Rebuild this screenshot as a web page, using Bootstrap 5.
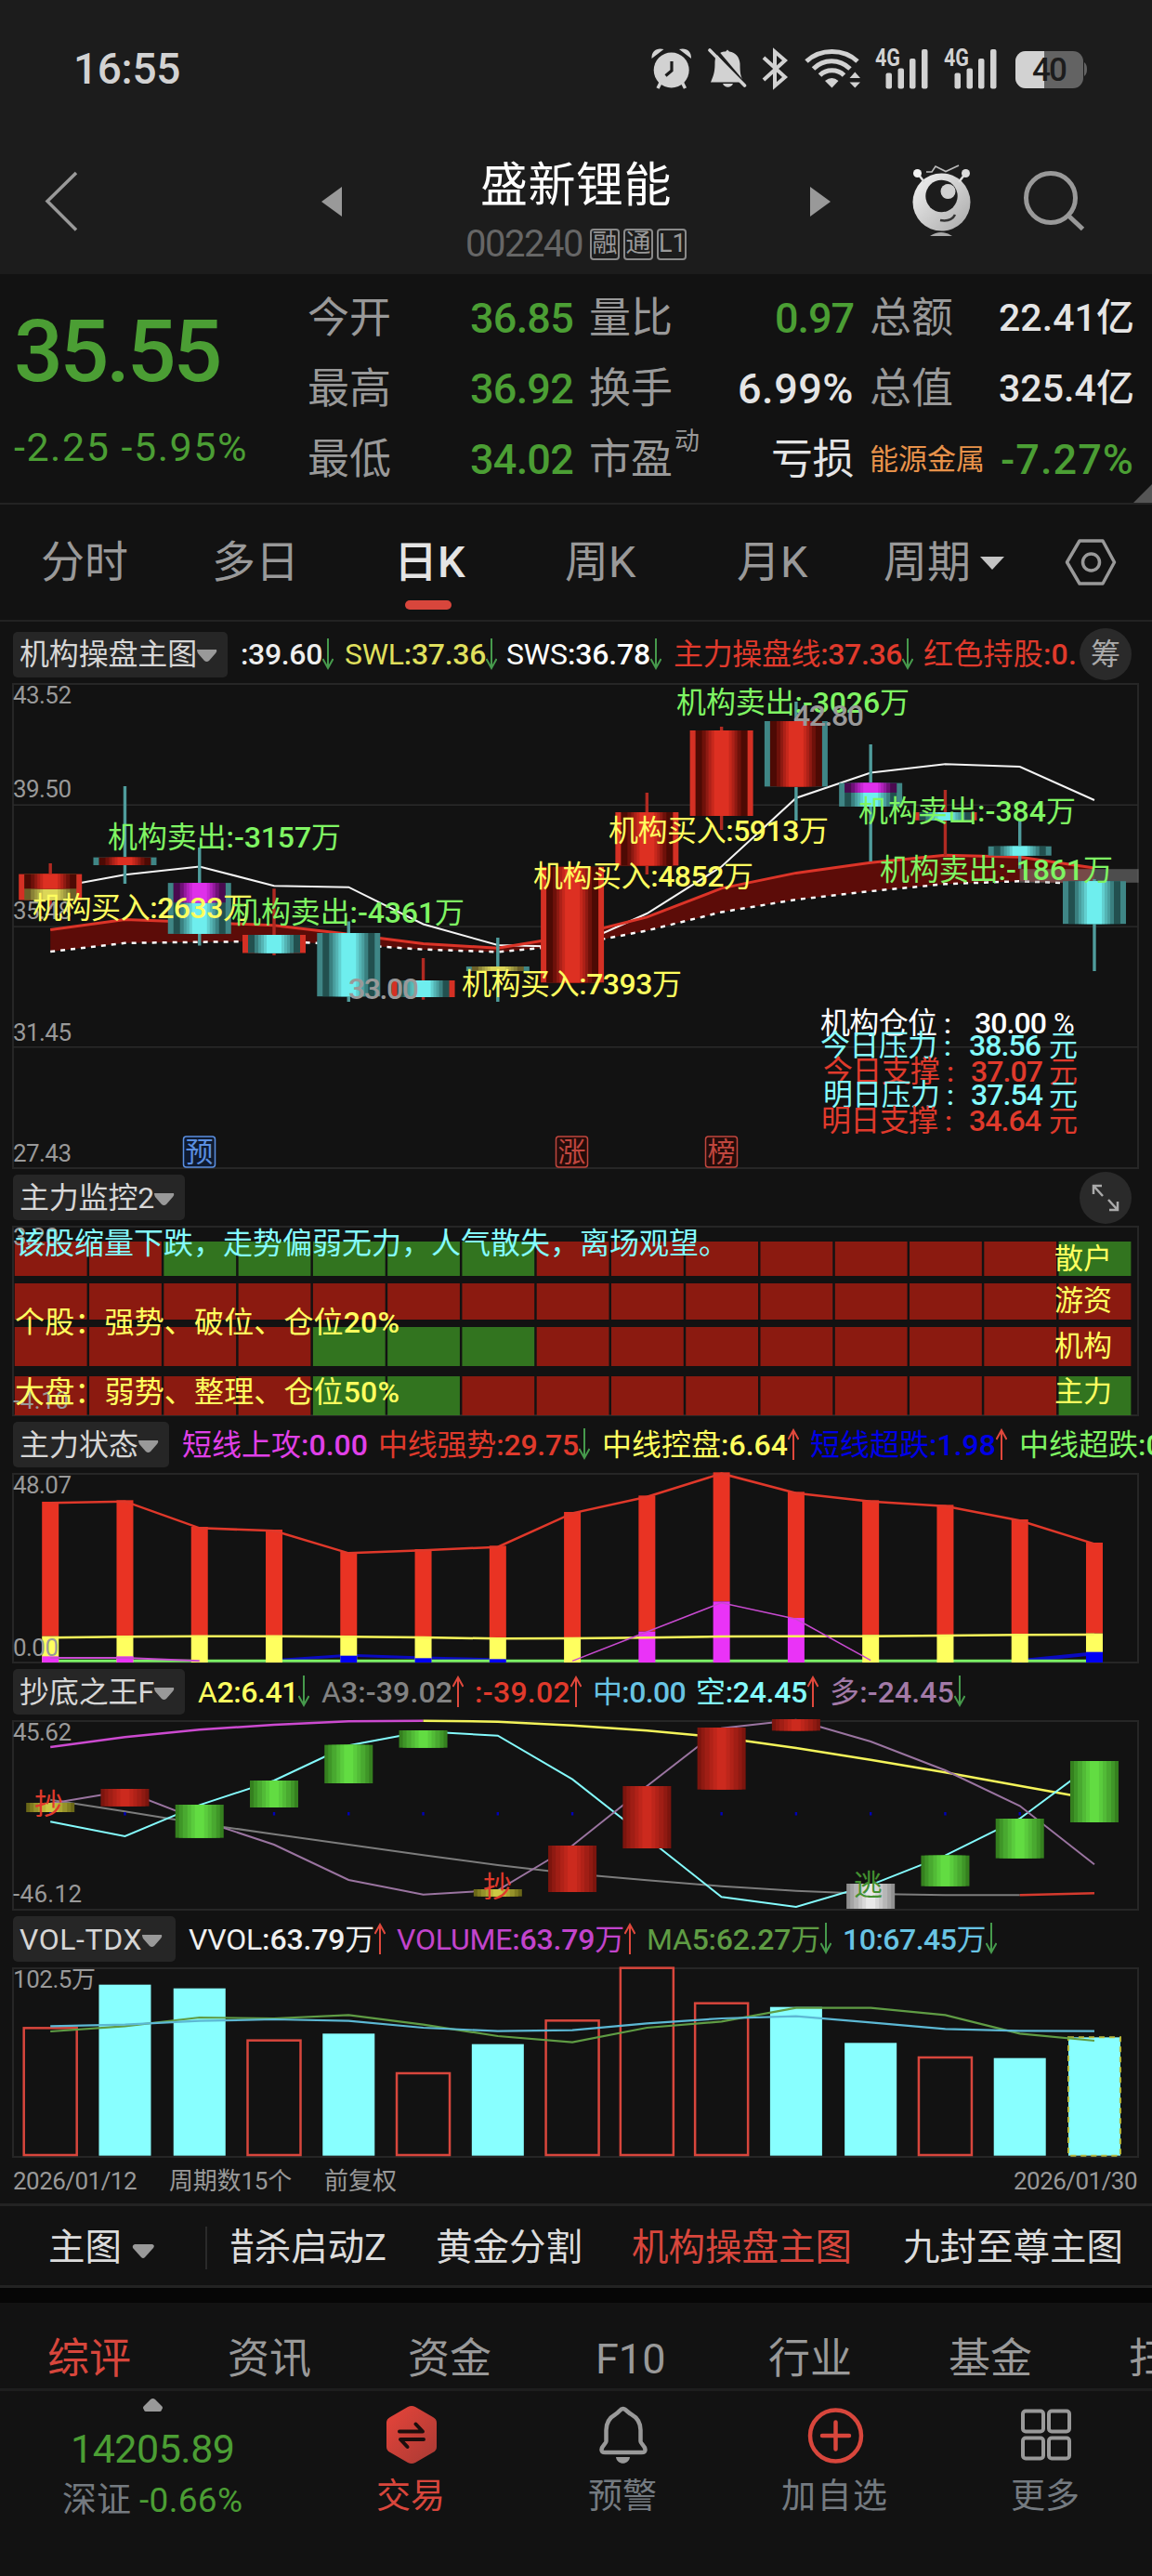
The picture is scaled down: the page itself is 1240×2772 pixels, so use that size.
<!DOCTYPE html>
<html lang="zh-CN">
<head>
    <meta charset="UTF-8">
    <meta name="viewport" content="width=device-width, initial-scale=1.0">
    <title>盛新锂能 002240</title>
    <!-- Bootstrap CDN -->
    <link href="https://cdn.jsdelivr.net/npm/bootstrap@5.3.0/dist/css/bootstrap.min.css" rel="stylesheet">
    <style>
        body {
            width: 1240px;
            height: 2772px;
            overflow: hidden;
            background: #121212;
            color: #999;
            font-family: Roboto, "Noto Sans CJK SC", sans-serif;
            font-size: 32px;
            line-height: 1;
            white-space: nowrap;
        }

        svg { display: block; flex: none; }
        svg.plot { overflow: visible; }
        .down { color: #4b9e34; }
        .light { color: #e4e4e4; }
        .hot { color: #d8463c; }
        .rule { border-bottom: 2px solid #232323; }

        .statusbar { height: 120px; background: #1c1c1c; padding: 0 60px 0 79px; }
        .clock { font-size: 46px; font-weight: 500; color: #d2d2d2; padding-top: 51px; }
        .titlebar { height: 175px; background: #1c1c1c; }
        .title-text { padding-top: 52px; }
        .stock-name { font-size: 51px; line-height: 56px; color: #fff; }
        .stock-code { font-size: 40px; color: #666; line-height: 34px; }
        .stock-line { margin-top: 18px; }
        .tag { border: 2px solid #8a8a8a; border-radius: 4px; width: 32px; height: 34px; font-size: 27px; line-height: 29px; color: #999; text-align: center; }

        .quote { height: 248px; padding: 9px 19px 0 15px; }
        .price { width: 316px; padding-top: 25px; }
        .price-now { font-size: 93px; line-height: 100px; font-weight: 500; }
        .price-diff { font-size: 43px; line-height: 60px; margin-top: 22px; }
        .facts { display: grid; grid-template-columns: 286px 285px 285px; column-gap: 17px; grid-auto-rows: 76px; font-size: 45px; }
        .facts .val { font-weight: 500; }
        .facts .cjk { font-weight: 400; }
        .sup { font-size: 27px; top: 6px; left: 92px; }
        .corner { right: 0; bottom: 0; }

        .periods { height: 126px; font-size: 47px; padding-left: 44px; }
        .period { height: 124px; line-height: 124px; }
        .pill { width: 50px; height: 10px; border-radius: 5px; background: #d8463c; left: 12px; bottom: 11px; }

        .legend-row { height: 61px; padding-left: 14px; }
        .legend-row.first { height: 67px; padding-top: 3px; }
        .legend-row .chip { height: 49px; border-radius: 5px; background: #262626; color: #d6d6d6; padding-left: 7px; }
        .fit { display: inline-block; }
        .round-btn { width: 56px; height: 56px; border-radius: 50%; background: #2a2a2a; right: 22px; top: 3px; font-size: 32px; color: #aaa; }
        .legend-row.first .round-btn { top: 7px; }

        .num { font-weight: 500; }
        .axis { fill: #999; font-size: 26px; }
        .dates { height: 49px; font-size: 26px; padding: 0 16px 0 14px; }
        .switcher { height: 91px; font-size: 39.5px; color: #dcdcdc; border-top: 3px solid #232323; border-bottom: 3px solid #232323; padding-top: 4px; }
        .vline { width: 2px; height: 46px; background: #2a2a2a; }
        .gap-bar { height: 16px; background: #060606; }
        .info-tabs { height: 92px; font-size: 45px; line-height: 66px; padding: 28px 0 0 51px; }
        .info-tabs > div { flex: 0 0 194px; }
        .bottom { border-top: 3px solid #1e1e1e; height: 202px; }
    </style>
</head>
<body>
    <!-- Phone status bar -->
    <div class="statusbar d-flex justify-content-between">
        <div class="clock"><span class="fit" data-w="115">16:55</span></div>
        <svg width="490" height="70" viewBox="0 0 490 70" style="margin-top: 40px" fill="#d2d2d2">
            <path d="M11.500 23C11 15 17 11 24.500 13ZM54 23C54.500 15 48.500 11 41 13Z"/>
            <circle cx="32.700" cy="35.500" r="19"/>
            <path d="M21 49l-3 6M44.500 49l3 6" stroke="#d2d2d2" stroke-width="3.500"/>
            <path d="M33 26v10l-6.500 5.500" fill="none" stroke="#1c1c1c" stroke-width="3.200"/>
            <path d="M80 22c3-5 7-6.500 11-6.500l2-2 2 2c7 1 11 6 11.500 13 0 11 1 13 2.500 17v3H75c4-9 4.500-13 4.500-22z"/>
            <path d="M88 50h11c-2 5-9 5-11 0z"/>
            <path d="M76 9l38 45" stroke="#1c1c1c" stroke-width="4"/>
            <path d="M74 14l37.500 38" stroke="#d2d2d2" stroke-width="3.600" stroke-linecap="round"/>
            <path d="M132 22l23 21-11 9.500V15.500L155 25 132 46" fill="none" stroke="#d2d2d2" stroke-width="4"/>
            <g fill="none" stroke="#d2d2d2" stroke-width="5">
                <path d="M178 26c15-14 40-14 55 0M185.500 34c11-11 28-11 39.500 0M192.500 41c7-7 19-7 26 0"/>
            </g>
            <path d="M198 47q7.500-6 14.500 0l-7 7.500zM224.500 44h11.500l-5.700-6.500zM224.500 48.500h11.500l-5.700 6z"/>
            <g id="signalBars">
                <rect x="263.500" y="38.500" width="6.500" height="17" rx="2"/>
                <rect x="276.500" y="33.500" width="6.500" height="22" rx="2"/>
                <rect x="289" y="23" width="6.500" height="32.500" rx="2"/>
                <rect x="302" y="13" width="6.500" height="42.500" rx="2"/>
                <text x="252" y="30.500" font-size="25" font-weight="700" textLength="27" lengthAdjust="spacingAndGlyphs">4G</text>
            </g>
            <use href="#signalBars" x="74"/>
            <rect x="403" y="15" width="73" height="40" rx="11" fill="#636363"/>
            <path d="M477 27c4 2 4 13 0 15z" fill="#636363"/>
            <path d="M434 15h-20a11 11 0 0 0-11 11v18a11 11 0 0 0 11 11h20z"/>
            <text x="421" y="47" font-size="35" font-weight="500" fill="#1c1c1c" textLength="38">40</text>
        </svg>
    </div>

    <!-- Title -->
    <div class="titlebar position-relative">
        <svg width="1240" height="175" viewBox="0 120 1240 175">
            <defs>
                <linearGradient id="ball" x1="0" y1="0" x2="1" y2="1"><stop stop-color="#f4f4f4"/><stop offset="1" stop-color="#a8a8a8"/></linearGradient>
            </defs>
            <path d="M82 186L51 216.500l31 31" fill="none" stroke="#999" stroke-width="3.500"/>
            <path d="M368 201v32l-22-16zM872 201v32l22-16z" fill="#999"/>
            <circle cx="1013.500" cy="217.500" r="31" fill="url(#ball)"/>
            <circle cx="1013.500" cy="211" r="17.200" fill="#1c1c1c"/>
            <circle cx="1020.500" cy="206" r="8" fill="#d0d0d0"/>
            <path d="M1012 237q12 2 16-6" fill="none" stroke="#333" stroke-width="2.500"/>
            <path d="M988 187l7 9M1039 187l-7 9" stroke="#ddd" stroke-width="2.500"/>
            <circle cx="987.500" cy="186.500" r="4.500" fill="#f2f2f2"/><circle cx="1039.500" cy="186.500" r="4.500" fill="#ddd"/>
            <path d="M997 185h6l4-6 11 5.500 14-6.500" fill="none" stroke="#bbb" stroke-width="1.600"/>
            <path d="M1001 254q12-8 24 0z" fill="#aaa"/>
            <circle cx="1131" cy="213" r="26.500" fill="none" stroke="#999" stroke-width="5"/>
            <path d="M1150.500 232.500l15 14" stroke="#999" stroke-width="5"/>
        </svg>
        <div class="title-text position-absolute top-0 start-50 translate-middle-x d-flex flex-column align-items-center">
            <div class="stock-name"><span class="fit" data-w="206">盛新锂能</span></div>
            <div class="stock-line d-flex align-items-center gap-1">
                <span class="stock-code me-1"><span class="fit" data-w="126">002240</span></span>
                <span class="tag">融</span><span class="tag">通</span><span class="tag">L1</span>
            </div>
        </div>
    </div>

    <!-- Quote -->
    <div class="quote rule d-flex position-relative">
        <div class="price down">
            <div class="price-now"><span class="fit" data-w="221">35.55</span></div>
            <div class="price-diff"><span class="fit" data-w="252">-2.25 -5.95%</span></div>
        </div>
        <div class="facts" id="facts"></div>
        <svg class="corner position-absolute" width="20" height="20" viewBox="0 0 20 20"><path d="M20 0v20H0z" fill="#555"/></svg>
    </div>

    <!-- Periods -->
    <div class="periods rule d-flex">
        <div class="period" style="width: 184px">分时</div>
        <div class="period" style="width: 196px">多日</div>
        <div class="period light position-relative" style="width: 184px"><span class="fw-medium">日K</span><span class="pill position-absolute"></span></div>
        <div class="period" style="width: 185px">周K</div>
        <div class="period" style="width: 158px">月K</div>
        <div class="period" style="width: 104px">周期</div>
        <svg width="185" height="124" viewBox="0 0 185 124">
            <path d="M0 56h26L13 70z" fill="#c4c4c4"/>
            <path d="M107 39h25l12.500 23L132 85h-25L93.500 62z" fill="none" stroke="#999" stroke-width="3.500" stroke-linejoin="round"/>
            <circle cx="119.500" cy="62" r="9" fill="none" stroke="#999" stroke-width="3.500"/>
        </svg>
    </div>

    <!-- Main chart -->
    <div class="legend-row first d-flex align-items-center position-relative" id="legendMain">
        <span class="round-btn position-absolute d-flex align-items-center justify-content-center">筹</span>
    </div>
    <svg class="plot" id="plotMain" width="1240" height="522" viewBox="0 736 1240 522"></svg>

    <!-- Monitor grid -->
    <div class="legend-row d-flex align-items-center position-relative" id="legendMonitor">
        <span class="round-btn position-absolute d-flex align-items-center justify-content-center">
            <svg width="30" height="30" viewBox="0 0 30 30" fill="none" stroke="#aaa" stroke-width="2.500"><path d="M2 11V2h9M2 2l10 11M28 19v9h-9M28 28L18 17"/></svg>
        </span>
    </div>
    <svg class="plot" id="plotMonitor" width="1240" height="205" viewBox="0 1319 1240 205"></svg>

    <!-- State -->
    <div class="legend-row d-flex align-items-center overflow-hidden" id="legendState"></div>
    <svg class="plot" id="plotState" width="1240" height="205" viewBox="0 1585 1240 205"></svg>

    <!-- Bottom fishing -->
    <div class="legend-row d-flex align-items-center" id="legendKing"></div>
    <svg class="plot" id="plotKing" width="1240" height="205" viewBox="0 1851 1240 205"></svg>

    <!-- Volume -->
    <div class="legend-row d-flex align-items-center" id="legendVol"></div>
    <svg class="plot" id="plotVol" width="1240" height="205" viewBox="0 2117 1240 205"></svg>

    <div class="dates d-flex align-items-center">
        <span class="fit" data-w="133">2026/01/12</span>
        <span class="fit" data-w="132" style="margin-left: 35px">周期数15个</span>
        <span class="fit" data-w="78" style="margin-left: 35px">前复权</span>
        <span class="fit ms-auto" data-w="133">2026/01/30</span>
    </div>

    <!-- Indicator switcher -->
    <div class="switcher d-flex align-items-center">
        <span style="margin-left: 52px">主图</span>
        <svg width="25" height="16" viewBox="0 0 25 16" class="mt-2" style="margin: 0 54px 0 11px"><path d="M3 0h19q3 1 1 4L14 14q-2 2-4 0L1 4Q0 1 3 0z" fill="#999"/></svg>
        <span class="vline"></span>
        <span class="d-flex justify-content-end overflow-hidden lh-base" style="width: 168px; margin-left: 25px">猎杀启动Z</span>
        <span style="margin-left: 53px">黄金分割</span>
        <span class="hot" style="margin-left: 53px">机构操盘主图</span>
        <span style="margin-left: 55px">九封至尊主图</span>
    </div>
    <div class="gap-bar"></div>

    <div class="info-tabs d-flex overflow-hidden">
        <div class="hot">综评</div><div>资讯</div><div>资金</div><div><span class="ps-2">F10</span></div><div>行业</div><div>基金</div><div>扫雷</div>
    </div>

    <!-- Bottom bar -->
    <div class="bottom">
        <svg width="1240" height="199" viewBox="0 2573 1240 199" font-size="37" fill="#747a80">
            <defs>
                <linearGradient id="hex" x1="0" y1="0" x2="1" y2="1"><stop stop-color="#e8443a"/><stop offset="1" stop-color="#a83a34"/></linearGradient>
            </defs>
            <path d="M155 2593q-2-2 0-4l7-7q2.500-2 5 0l7 7q2 2 0 4 0 2-3 2h-13q-3 0-3-2z" fill="#999"/>
            <text x="76" y="2650" font-size="43" fill="#4b9e34" textLength="177">14205.89</text>
            <text x="67" y="2703">深证</text>
            <text x="150" y="2703" fill="#4b9e34" textLength="111">-0.66%</text>

            <path d="M439 2590q4-2 8 0l19 11q4 2 4 6v26q0 4-4 6l-19 11q-4 2-8 0l-19-11q-4-2-4-6v-26q0-4 4-6z" fill="url(#hex)"/>
            <path d="M430 2616.500h25l-7.500-8M456 2625h-25l7.500 8" fill="none" stroke="#1c0e0d" stroke-width="4" stroke-linecap="round" stroke-linejoin="round"/>
            <text x="405" y="2699" fill="#d8463c">交易</text>

            <path d="M670.500 2592c-3 0-4 4-8 6-7 4-10 9-10 17v12c0 3-5 5-5 9 0 3 2 3 4 3h39c2 0 4 0 4-3 0-4-5-6-5-9v-12c0-8-3-13-10-17-4-2-6-6-9-6z" fill="none" stroke="#999" stroke-width="4.500" stroke-linejoin="round"/>
            <path d="M663 2644h15c-1 9-14 9-15 0z" fill="#999"/>
            <text x="633" y="2699">预警</text>

            <circle cx="899.500" cy="2621" r="27.500" fill="none" stroke="#d8463c" stroke-width="4.500"/>
            <path d="M899.500 2606.500v29M885 2621h29" stroke="#d8463c" stroke-width="4.500" stroke-linecap="round"/>
            <text x="841" y="2699" textLength="114">加自选</text>

            <g fill="none" stroke="#999" stroke-width="4">
                <rect x="1101" y="2594.500" width="22" height="22" rx="3"/><rect x="1129" y="2594.500" width="22" height="22" rx="3"/>
                <rect x="1101" y="2623.500" width="22" height="22" rx="3"/><rect x="1129" y="2623.500" width="22" height="22" rx="3"/>
            </g>
            <text x="1088" y="2699">更多</text>
        </svg>
    </div>

    <!-- Bootstrap JS -->
    <script src="https://cdn.jsdelivr.net/npm/bootstrap@5.3.0/dist/js/bootstrap.bundle.min.js"></script>
    <script>
        const RED = '#e93323', GREEN = '#7ff563', YELLOW = '#ffff5f', CYAN = '#84fbfd', WHITE = '#fff';
        const UP = 'up', DOWN = 'down';

        // Digits are set heavier than the words around them
        const digits = (s, tag) => s.replace(/[\d.:%-]+/g, m => `<${tag} class="num">${m}</${tag}>`);

        // Quote facts: label, value, width, class
        const facts = [
            ['今开', '36.85', 111, 'down'], ['量比', '0.97', 85, 'down'], ['总额', '22.41亿', 146, 'light'],
            ['最高', '36.92', 111, 'down'], ['换手', '6.99%', 125, 'light'], ['总值', '325.4亿', 146, 'light'],
            ['最低', '34.02', 111, 'down'], ['市盈', '亏损', 89, 'light cjk'], ['能源金属', '-7.27%', 144, 'down']
        ];
        document.getElementById('facts').innerHTML = facts.map(([label, value, w, cls], i) => {
            const sector = i === 8;
            const size = value.includes('亿') ? 41 : 45;
            return `<div class="d-flex align-items-center justify-content-between position-relative">
                <span style="${sector ? 'font-size:31px;color:#e8924a' : ''}">${label}</span>
                ${i === 7 ? '<span class="sup position-absolute">动</span>' : ''}
                <span class="val ${cls}" style="font-size:${size}px"><span class="fit" data-w="${w}">${value}</span></span></div>`;
        }).join('');

        // Legends: text, colour, left edge, width, arrow
        function legend(id, name, chipW, nameW, items) {
            let x = 14 + chipW;
            let html = `<span class="chip d-flex align-items-center flex-shrink-0" style="width:${chipW}px"><span class="fit" data-w="${nameW}">${name}</span>
                <svg width="22" height="14" viewBox="0 0 22 14" class="mt-1"><path d="M0 0h21q1 2-1 4l-7 8q-2.500 2-5 0L1 4Q0 2 0 0z" fill="#999"/></svg></span>`;
            items.forEach(([text, color, left, w, dir]) => {
                html += `<span class="flex-shrink-0" style="color:${color};margin-left:${left - x}px"><span class="fit" data-w="${w}">${digits(text, 'span')}</span></span>`;
                x = left + w;
                if (dir) {
                    const path = dir === UP ? 'M6 34V2M0.500 12L6 2l5.500 10' : 'M6 0v32M0.500 22L6 32l5.500-10';
                    html += `<svg width="12" height="35" viewBox="0 0 12 35"><path d="${path}" fill="none" stroke="${dir === UP ? '#e0483c' : '#469a4c'}" stroke-width="2"/></svg>`;
                    x += 12;
                }
            });
            document.getElementById(id).insertAdjacentHTML('afterbegin', html);
        }
        legend('legendMain', '机构操盘主图', 231, 191, [
            [':39.60', '#eee', 259, 88, DOWN], ['SWL:37.36', '#dfdf5c', 371, 152, DOWN], ['SWS:36.78', WHITE, 545, 155, DOWN],
            ['主力操盘线:37.36', '#e03a2c', 725, 246, DOWN], ['红色持股:0.', '#e03a2c', 994, 165]
        ]);
        legend('legendMonitor', '主力监控2', 185, 145, []);
        legend('legendState', '主力状态', 168, 128, [
            ['短线上攻:0.00', '#e040e8', 196, 200], ['中线强势:29.75', '#e03a2c', 407, 216, DOWN], ['中线控盘:6.64', YELLOW, 648, 200, UP],
            ['短线超跌:1.98', '#0000e6', 872, 200, UP], ['中线超跌:0.00', GREEN, 1097, 200]
        ]);
        legend('legendKing', '抄底之王F', 185, 145, [
            ['A2:6.41', YELLOW, 213, 108, DOWN], ['A3:-39.02', '#828282', 346, 141, UP], [':-39.02', '#e03a2c', 511, 103, UP],
            ['中:0.00', '#68c4e4', 638, 100], ['空:24.45', CYAN, 749, 120, UP], ['多:-24.45', '#a37aa8', 893, 134, DOWN]
        ]);
        legend('legendVol', 'VOL-TDX', 175, 132, [
            ['VVOL:63.79万', '#f0f0f0', 203, 200, UP], ['VOLUME:63.79万', '#c244cc', 427, 245, UP],
            ['MA5:62.27万', '#5f9c44', 696, 187, DOWN], ['10:67.45万', '#68c4e4', 907, 154, DOWN]
        ]);

        // Plot helpers
        const xs = Array.from({ length: 15 }, (_, i) => 54.2 + 80.27 * i);
        const rect = (x, y, w, h, fill, more = '') => `<rect x="${x}" y="${y}" width="${w}" height="${h}" fill="${fill}" ${more}/>`;
        const text = (s, x, y, w, fill, size = 32) => `<text x="${x}" y="${y}" font-size="${size}" fill="${fill}" ${w ? `textLength="${w}"` : ''}>${digits(s, 'tspan')}</text>`;
        const axis = (s, y, w) => `<text class="axis" x="14" y="${y}" textLength="${w}">${s}</text>`;
        const points = (ys, from = 0) => ys.map((y, i) => `${xs[i + from]},${y}`).join(' ');
        const line = (ys, color, width = 2, from = 0, more = '') => `<polyline points="${points(ys, from)}" fill="none" stroke="${color}" stroke-width="${width}" ${more}/>`;
        const frame = (top, bottom) => `<rect x="14" y="${top}" width="1211" height="${bottom - top}" fill="none" stroke="#262626" stroke-width="2"/>`;
        // Shaded bar: stacked rects narrowing to the bright centre
        function shaded(cx, top, bottom, widths, colors) {
            return widths.map((w, i) => rect(cx - w / 2, top, w, bottom - top, colors[i])).join('');
        }

        // Main chart
        const widths = [68, 56, 42, 34, 28, 22, 16];
        const tone = {
            red: ['#4d0a04', '#6e110a', '#8e1a12', '#ad2118', '#c6281c', '#dd3022'],
            cyan: ['#22504f', '#3a8080', '#4a9f9f', '#55b5b5', '#62d0d0', '#6eeeee'],
            magenta: ['#4a0a50', '#701078', '#941a9e', '#b022bb', '#c828d4', '#de30ea'],
            gold: ['#6b5f28', '#8a8236', '#a09a40', '#b5ae48', '#c8c250', '#dcd658']
        };
        const R = '#d43024', C = '#3f8686';
        // high, low, body top, body bottom, edge, tone, split y, upper tone
        const candles = [
            [929, 978, 940.600, 968.500, R, 'gold', 956.300, 'red'],
            [846, 951, 922.600, 931, C, 'red'],
            [912, 1017.500, 950.100, 1004.900, C, 'cyan', 971.200, 'magenta'],
            [956.300, 1028, 1006, 1025.500, R, 'cyan'],
            [991.500, 1078, 1004, 1072.200, C, 'cyan'],
            [1031, 1075.700, 1055, 1073, R, 'cyan'],
            [1009, 1078, 1040, 1045, C, 'gold'],
            [932.900, 1057.300, 932.900, 1057.300, R, 'red'],
            [853, 941, 874, 931.400, R, 'red'],
            [782, 893, 786, 878, R, 'red'],
            [755, 883, 776, 846.400, C, 'red'],
            [801, 927, 842.600, 867.900, C, 'cyan', 852.900, 'magenta'],
            [850, 920.700, 874, 882.800, R, 'cyan'],
            [884, 934.800, 910.700, 920.700, C, 'cyan'],
            [946, 1045, 948.200, 994.200, C, 'cyan']
        ];
        const upper = [1000.600, 989.600, 992.600, 995.700, 1005.200, 1015.600, 1020.200, 1007, 986.900, 955.900, 939.400, 928.300, 920.300, 922.200, 934];
        const lower = [1024, 1014.800, 1013.700, 1012.900, 1016.300, 1021.700, 1024.400, 1017, 1001.400, 981.500, 968, 959, 951.300, 948.200, 951.600];
        let main = frame(736, 1257);
        [865.500, 996.400, 1126].forEach(y => { main += rect(14, y, 1211, 1.500, '#2a2a2a'); });
        main += `<polygon points="${points(upper)} ${lower.map((y, i) => `${xs[i]},${y}`).reverse().join(' ')}" fill="#5c0c08"/>`;
        main += line([956, 941.300, 932.500, 953.200, 954.700, 994.500, 1017, 1019, 983, 932.500, 858.700, 831.500, 822.300, 825, 861], '#f4f4f4');
        main += line(upper, '#dc3428', 3) + line(lower, '#fff', 2.500, 0, 'stroke-dasharray="5 6"');
        main += rect(1097.600, 935.200, 128, 14.600, 'rgba(150,150,150,.45)');
        candles.forEach(([high, low, top, bottom, edge, kind, split, above], i) => {
            main += rect(xs[i] - 1.700, high, 3.400, low - high, edge === R ? '#b02a22' : '#4f9c9c');
            main += shaded(xs[i], top, bottom, widths, [edge, ...tone[kind]]);
            if (split) main += shaded(xs[i], top, split, widths.slice(1), tone[above]);
        });
        main += axis('43.52', 757, 63) + axis('39.50', 858.300, 63) + axis('35.48', 989.200, 63) + axis('31.45', 1120, 63) + axis('27.43', 1250, 63);
        [
            ['机构卖出:-3157万', 116, 912, 251, GREEN], ['机构买入:2633万', 35, 988, 237, YELLOW], ['机构卖出:-4361万', 249, 992.500, 251, GREEN],
            ['机构买入:7393万', 497, 1069.500, 237, YELLOW], ['机构买入:4852万', 574, 953.500, 237, YELLOW], ['机构买入:5913万', 655, 904.500, 237, YELLOW],
            ['机构卖出:-3026万', 728, 767, 251, GREEN], ['机构卖出:-384万', 924, 883.500, 234, GREEN], ['机构卖出:-1861万', 947, 947, 251, GREEN]
        ].forEach(([s, x, y, w, c]) => { main += text(s, x, y, w, c); });
        main += text('33.00', 375, 1074.500, 76, '#999') + text('42.80', 854, 781, 76, '#999');
        [
            ['机构仓位', '30.00', '%', 1112, 883, 1049, '#fff'], ['今日压力', '38.56', '元', 1135.700, 883, 1043, CYAN],
            ['今日支撑', '37.07', '元', 1163.700, 886, 1045, '#e03a2c'], ['明日压力', '37.54', '元', 1189, 886, 1045, CYAN],
            ['明日支撑', '34.64', '元', 1216.500, 884, 1043, '#e03a2c']
        ].forEach(([s, n, u, y, x, nx, c]) => {
            main += text(s, x, y, 126, c) + text(':', x + 133, y, 0, c, 30) + text(n, nx, y, 78, c);
            main += `<text x="${u === '%' ? 1134 : 1129}" y="${y}" font-size="31" fill="${c}">${u}</text>`;
        });
        [['预', 197.500, '#5b8fe0', '#0e1a30'], ['涨', 598.500, '#c0463e', '#240c0a'], ['榜', 759.500, '#c0463e', '#240c0a']].forEach(([s, x, c, bg]) => {
            main += rect(x, 1223, 34, 33, bg, `rx="3" stroke="${c}" stroke-width="1.500"`) + text(s, x + 2, 1250, 30, c, 30);
        });
        document.getElementById('plotMain').innerHTML = main;

        // Monitor grid: row top, bottom, green cells
        let monitor = frame(1320, 1523);
        [[1336, 1373, [2, 3, 4, 5, 6, 14]], [1381, 1420, []], [1428, 1470, [4, 5, 6]], [1481, 1523, [4, 5, 14]]].forEach(([top, bottom, green]) => {
            xs.forEach((x, i) => { monitor += rect(x - 38.400, top, 77.800, bottom - top, green.includes(i) ? '#32741f' : '#8b1a10'); });
        });
        monitor += axis('3.20', 1340, 49) + axis('-4.10', 1515.500, 60);
        monitor += text('该股缩量下跌，走势偏弱无力，人气散失，离场观望。', 16, 1349, 768, CYAN);
        monitor += text('个股：强势、破位、仓位20%', 16, 1433.700, 414, YELLOW) + text('大盘：弱势、整理、仓位50%', 16, 1508.500, 414, YELLOW);
        monitor += text('散户', 1135, 1365, 62, YELLOW, 31) + text('游资', 1135, 1410, 62, YELLOW, 31) + text('机构', 1135, 1458.500, 62, YELLOW, 31) + text('主力', 1135, 1508, 62, YELLOW, 31);
        document.getElementById('plotMonitor').innerHTML = monitor;

        // State bars, values in thirds of a pixel from 1580
        const sy = v => 1580 + v / 3;
        let state = frame(1586, 1789);
        const tops = [108, 103, 189, 198, 270, 261, 250, 141, 88, 13, 76, 103, 118, 165, 240];
        const mids = [542, 541, 540, 540, 542, 545, 548, 548, 527, 430, 483, 538, 537, 535, 533];
        const blues = { 4: 605, 5: 613, 6: 616, 14: 593 };
        state += line([620, 604, 612, 618].map(sy), '#0a0ac0', 3, 3) + line([622, 598].map(sy), '#0a0ac0', 4, 13);
        state += line(Array(15).fill(sy(622)), '#7cf066', 3);
        tops.forEach((t, i) => {
            const peak = i >= 8 && i <= 10;
            state += rect(xs[i] - 9, sy(t), 18, sy(mids[i]) - sy(t), RED);
            state += rect(xs[i] - 9, sy(mids[i]), 18, sy(627) - sy(mids[i]), peak ? '#ea33f7' : YELLOW);
            if (blues[i]) state += rect(xs[i] - 9, sy(blues[i]), 18, sy(627) - sy(blues[i]), '#0000f5');
            if (i < 2) state += rect(xs[i] - 9, sy(607), 18, sy(627) - sy(607), '#ea33f7');
        });
        state += line(tops.map(t => sy(t + 4)), '#e0382a', 2.500);
        state += line([547, 544, 542, 542, 544, 546, 550, 549, 547, 543, 542, 542, 540, 538, 537].map(sy), '#f8f85a', 2.500);
        state += line([612, 612, 622].map(sy), '#c84ad0', 2) + line([622, 528, 434, 487, 620].map(sy), '#c84ad0', 1.500, 7);
        state += axis('48.07', 1606.700, 63) + axis('0.00', 1781.700, 49);
        document.getElementById('plotState').innerHTML = state;

        // Bottom fishing chart
        const ky = v => 1800 + v / 3;
        const kWidths = [52, 44, 36, 26, 18, 10];
        const kTone = {
            g: ['#35801f', '#3f9628', '#49a930', '#52bb37', '#5acc3d', '#62dc42'],
            r: ['#7c150e', '#8f1a12', '#a01e15', '#b02218', '#be261b', '#cc2a1e'],
            y: ['#6a6718', '#807c20', '#96922a', '#aaa632', '#bcb83a', '#ccc844'],
            w: ['#909090', '#a4a4a4', '#b6b6b6', '#c8c8c8', '#d8d8d8', '#e8e8e8']
        };
        let king = frame(1852, 2055);
        king += line([240, 208, 184, 168, 157, 155].map(ky), '#cc4ad0', 2.500) + line([155, 158, 170, 187, 209, 243, 281, 322, 365, 409].map(ky), '#f4f45a', 2.500, 5);
        king += line([410, 448, 487, 521, 555, 589, 621, 649, 670, 689, 704, 714, 718, 718].map(ky), '#7c7c7c', 2) + line([718, 712].map(ky), '#d43a2e', 2.500, 13);
        king += line([481, 528, 427, 348, 235, 190, 203, 344, 533, 724, 756, 685, 590, 471, 292].map(ky), CYAN, 2);
        king += line([422, 382, 475, 555, 669, 716, 702, 558, 366, 179, 152, 222, 315, 430, 619].map(ky), '#9a74a0', 2);
        xs.forEach(x => { king += rect(x - 1.200, 1950, 2.400, 3.500, '#0000b8'); });
        [
            [420, 450, 'y'], [375, 431, 'r'], [426, 533, 'g'], [348, 435, 'g'], [233, 357, 'g'], [186, 242, 'g'], [699, 722, 'y'], [558, 708, 'r'],
            [366, 567, 'r'], [177, 377, 'r'], [150, 187, 'r'], [681, 762, 'w'], [590, 689, 'g'], [471, 599, 'g'], [285, 483, 'g']
        ].forEach(([t, b, k], i) => { king += shaded(xs[i], ky(t), ky(b), kWidths, kTone[k]); });
        king += text('抄', 37, 1952, 0, '#e03a2c', 31) + text('抄', 520, 2040.500, 0, '#e03a2c', 31) + text('逃', 919, 2038.500, 0, '#439030', 31);
        king += axis('45.62', 1872.700, 63) + axis('-46.12', 2047, 74);
        document.getElementById('plotKing').innerHTML = king;

        // Volume chart
        const vy = v => 2060 + v / 3;
        let vol = frame(2118, 2321) + axis('102.5万', 2139, 89);
        [[367], [227, 1], [239, 1], [407], [385, 1], [513], [419, 1], [343], [173], [287], [299, 1], [415, 1], [462], [464, 1], [397, 2]].forEach(([t, fall], i) => {
            if (fall) vol += rect(xs[i] - 28, vy(t), 56, vy(779) - vy(t), '#88ffff', fall === 2 ? 'stroke="#b8b83c" stroke-width="2" stroke-dasharray="6 5"' : '');
            else vol += rect(xs[i] - 28.500, vy(t), 57, vy(777) - vy(t), 'none', 'stroke="#d8463c" stroke-width="2.500"');
        });
        vol += line([378, 361, 333, 336, 325, 356, 393, 413, 366, 346, 302, 302, 325, 385, 408].map(vy), '#5f9c44', 2.200);
        vol += line([361, 356, 344, 339, 344, 366, 377, 374, 352, 336, 329, 349, 370, 376, 377].map(vy), '#5cb8d4', 2.200);
        document.getElementById('plotVol').innerHTML = vol;

        // Spread each figure to its column width
        document.querySelectorAll('.fit').forEach(el => {
            const want = Number(el.dataset.w);
            const space = (want - el.getBoundingClientRect().width) / el.textContent.length;
            el.style.letterSpacing = space + 'px';
        });
    </script>
</body>
</html>
